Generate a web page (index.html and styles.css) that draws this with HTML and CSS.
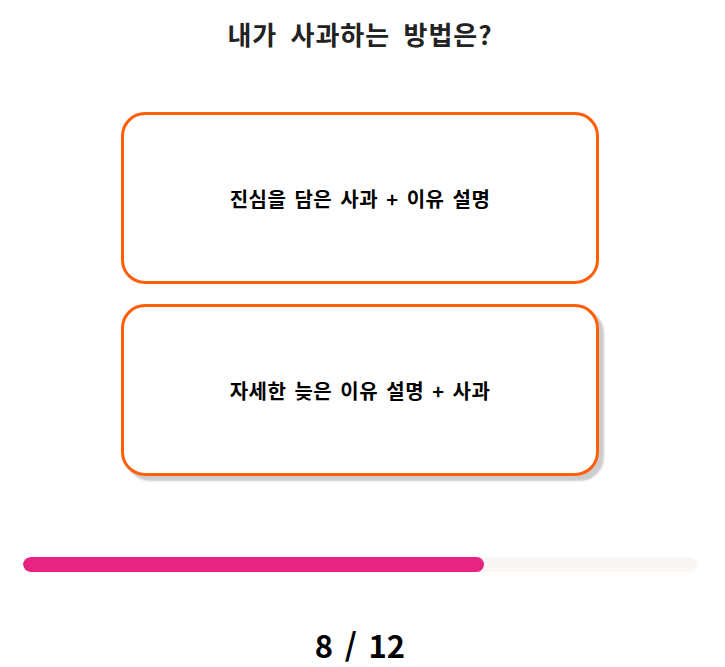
FILE: index.html
```html
<!DOCTYPE html>
<html lang="ko">
<head>
<meta charset="utf-8">
<link rel="stylesheet" href="styles.css">
</head>
<body>
<main class="quiz">
  <h1 class="question">내가 사과하는 방법은?</h1>
  <div class="options">
    <button class="option">진심을 담은 사과 + 이유 설명</button>
    <button class="option option-hover">자세한 늦은 이유 설명 + 사과</button>
  </div>
  <div class="progress"><div class="progress-fill" style="width:68.4%"></div></div>
  <div class="counter">8 / 12</div>
</main>
</body>
</html>
```
FILE: styles.css
```css
html, body {
  margin: 0;
  padding: 0;
  background: #fff;
}
body {
  font-family: "Noto Sans CJK KR", "Noto Sans", sans-serif;
  color: #000;
}
.quiz {
  width: 720px;
  display: flex;
  flex-direction: column;
  align-items: center;
}
.question {
  margin: 17px 0 0;
  font-size: 26px;
  line-height: 34px;
  font-weight: 700;
  letter-spacing: 1px;
  word-spacing: 5px;
  color: #222;
}
.options {
  margin-top: 61px;
  display: flex;
  flex-direction: column;
  gap: 20px;
}
.option {
  width: 478px;
  height: 172px;
  box-sizing: border-box;
  border: 3px solid #ff5f0a;
  border-radius: 24px;
  background: #fff;
  font-family: inherit;
  font-size: 20px;
  font-weight: 700;
  letter-spacing: 0.5px;
  word-spacing: 2px;
  color: #000;
  padding: 0;
  cursor: pointer;
}
.option-hover {
  box-shadow: 5px 5px 2px rgba(0, 0, 0, 0.2);
}
.progress {
  margin-top: 81px;
  align-self: stretch;
  margin-left: 23px;
  margin-right: 23px;
  height: 15px;
  border-radius: 8px;
  background: #faf6f3;
  overflow: hidden;
}
.progress-fill {
  height: 100%;
  background: #e72481;
  border-radius: 8px;
}
.counter {
  margin-top: 52px;
  font-size: 31px;
  line-height: 42px;
  font-weight: 700;
  word-spacing: 3px;
  color: #000;
}
```
